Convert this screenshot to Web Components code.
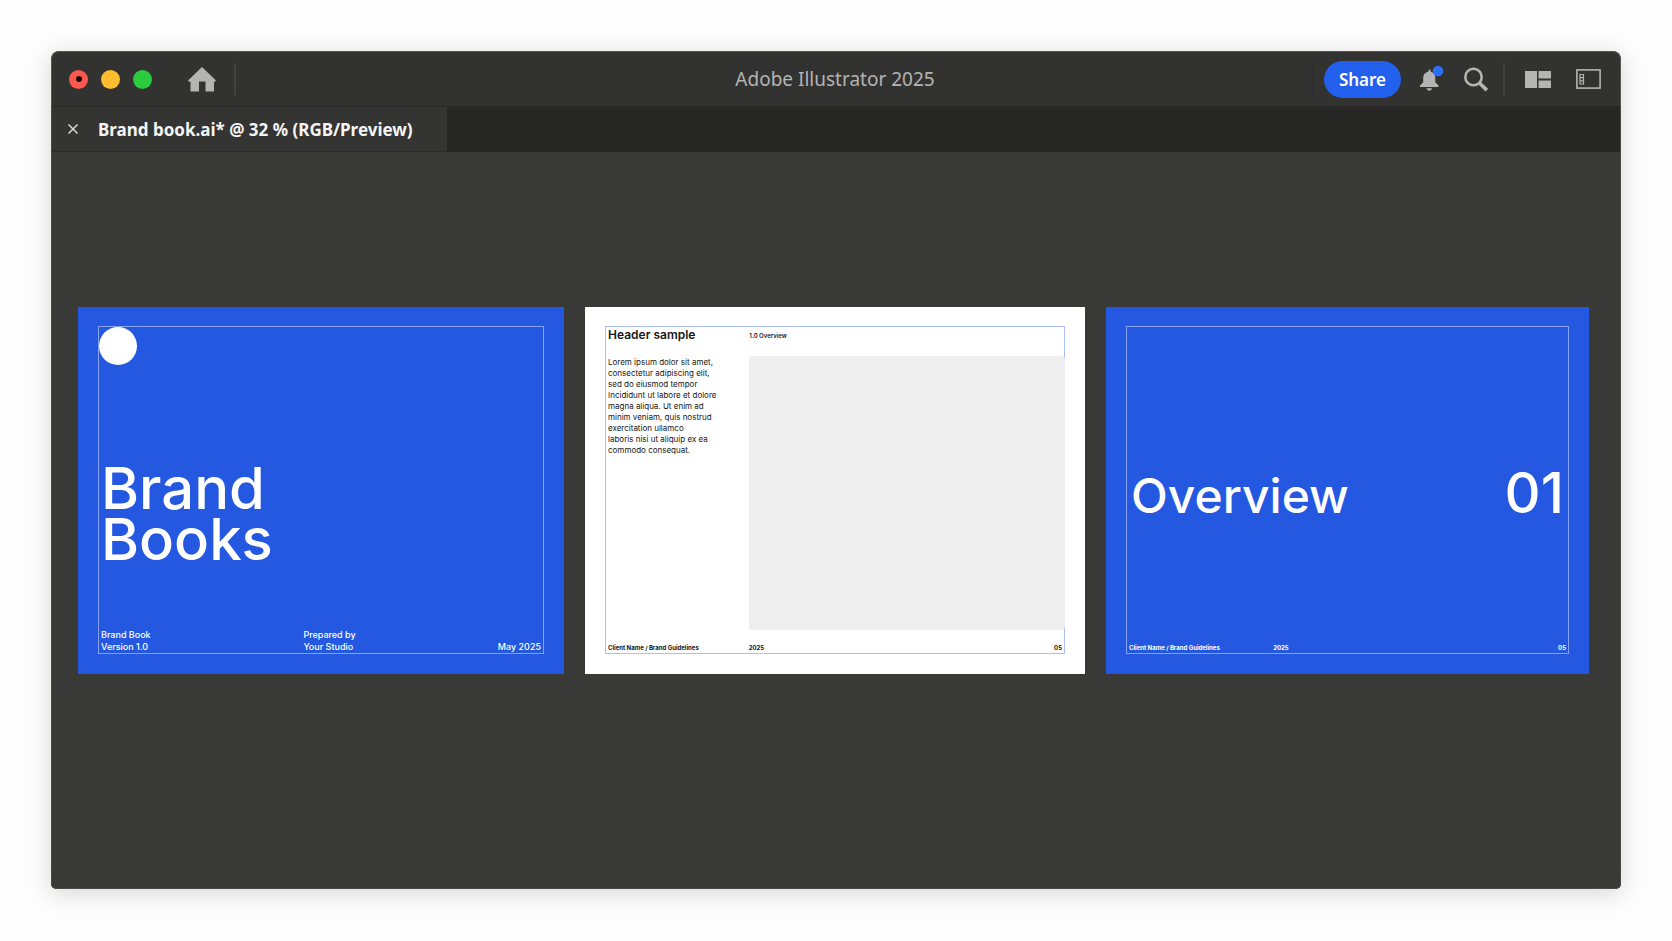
<!DOCTYPE html>
<html lang="en">
<head>
  <meta charset="UTF-8">
  <meta name="viewport" content="width=device-width, initial-scale=1.0">
  <title>Adobe Illustrator 2025</title>
  <style>
    body {
      margin: 0;
      background-color: #fdfdfd;
      font-family: "Noto Sans", "Open Sans", sans-serif;
    }
  </style>
</head>
<body>
  <app-window>
    <title-bar slot="title">Adobe Illustrator 2025</title-bar>
    <tab-bar slot="tabs">Brand book.ai* @ 32 % (RGB/Preview)</tab-bar>

    <art-canvas>
      <cover-board>
        <span slot="title">Brand<br>Books</span>
        <span slot="left">Brand Book<br>Version 1.0</span>
        <span slot="middle">Prepared by<br>Your Studio</span>
        <span slot="right">May 2025</span>
      </cover-board>
      <page-board>
        <span slot="heading">Header sample</span>
        <span slot="section">1.0 Overview</span>
        <span slot="text">Lorem ipsum dolor sit amet,<br>consectetur adipiscing elit,<br>sed do eiusmod tempor<br>Incididunt ut labore et dolore<br>magna aliqua. Ut enim ad<br>minim veniam, quis nostrud<br>exercitation ullamco<br>laboris nisi ut aliquip ex ea<br>commodo consequat.</span>
        <span slot="left">Client Name / Brand Guidelines</span>
        <span slot="middle">2025</span>
        <span slot="right">05</span>
      </page-board>
      <divider-board>
        <span slot="title">Overview</span>
        <span slot="number">01</span>
        <span slot="left">Client Name / Brand Guidelines</span>
        <span slot="middle">2025</span>
        <span slot="right">05</span>
      </divider-board>
    </art-canvas>
  </app-window>

  <script>
    class AppWindow extends HTMLElement {
      constructor() {
        super();
        this.attachShadow({ mode: 'open' });
      }

      connectedCallback() {
        this.shadowRoot.innerHTML = `
        <style>
          :host {
            display: flex;
            box-sizing: border-box;
            min-height: 100vh;
            padding: 51px 51px 52px;
          }

          .window {
            flex: 1;
            display: flex;
            flex-direction: column;
            min-width: 0;
            overflow: hidden;
            border-radius: 8px 8px 5px 5px;
            background-color: #393938;
            box-shadow: 0 4px 24px rgba(0, 0, 0, 0.16);
          }
        </style>
        <div class="window">
          <slot name="title"></slot>
          <slot name="tabs"></slot>
          <slot></slot>
        </div>
        `;
      }
    }

    class TitleBar extends HTMLElement {
      constructor() {
        super();
        this.attachShadow({ mode: 'open' });
      }

      connectedCallback() {
        this.shadowRoot.innerHTML = `
        <style>
          :host {
            display: grid;
            grid-template-columns: 1fr auto 1fr;
            align-items: center;
            box-sizing: border-box;
            height: 56px;
            padding: 0 19px 0 17px;
            color: #b4b4b3;
            background-color: #323231;
            border: 1px solid #555553;
            border-bottom: 1px solid #272726;
            border-radius: 8px 8px 0 0;
          }

          button {
            display: block;
            padding: 0;
            border: none;
            color: inherit;
            font: inherit;
            background: none;
            cursor: pointer;
          }

          svg {
            display: block;
          }

          h1 {
            margin: 0;
            font-size: 19px;
            font-weight: 400;
            line-height: 24px;
          }

          .group {
            display: flex;
            align-items: center;
          }

          .lights {
            display: flex;
            gap: 13px;
            margin-right: 36px;
          }

          .light {
            display: grid;
            place-items: center;
            width: 19px;
            height: 19px;
            border-radius: 50%;
          }

          .close { background-color: #fc5850; }
          .minimise { background-color: #fdbd2e; }
          .zoom { background-color: #2bcb40; }

          .close::after {
            content: '';
            width: 6px;
            height: 6px;
            border-radius: 50%;
            background-color: #1c0505;
          }

          .divider {
            width: 2px;
            height: 32px;
            background-color: #424241;
          }

          .home { margin-right: 18px; }

          .actions { justify-content: flex-end; }

          .share {
            height: 37px;
            margin: 0 18px 0 10px;
            padding: 0 15px;
            border-radius: 19px;
            color: #fff;
            font-size: 17px;
            font-weight: 600;
            background-color: #2360ee;
          }

          .faint { background-color: #2d2d2c; }
          .search { margin: 0 15px 0 20px; }
          .layout { margin: 0 25px 0 20px; }
        </style>
        <div class="group">
          <div class="lights">
            <button class="light close" aria-label="Close"></button>
            <button class="light minimise" aria-label="Minimise"></button>
            <button class="light zoom" aria-label="Zoom"></button>
          </div>
          <button class="home" aria-label="Home">
            <svg width="28" height="25" viewBox="0 0 28 25" fill="#b4b4b3">
              <path d="M14 0L28 13.500L26.800 14.800H26V24.500H17.500V14.500H11V24.500H2.500V14.800H1.200L0 13.500Z"/>
            </svg>
          </button>
          <span class="divider"></span>
        </div>
        <h1><slot></slot></h1>
        <div class="group actions">
          <span class="divider faint"></span>
          <button class="share">Share</button>
          <button aria-label="Notifications">
            <svg width="25" height="28" viewBox="0 0 25 28">
              <path fill="#b4b4b3" d="M9.500 5a1.300 1.300 0 0 1 2 0v1.500c3.300.8 4.800 3.200 4.800 6.200v4.500l3.200 3.300v1.500H1v-1.500l3.200-3.300v-4.500c0-3 1.800-5.400 5.300-6.200zM7.500 23.300h5.500c-.3 1.500-1.300 2.500-2.700 2.500s-2.500-1-2.800-2.500z"/>
              <circle cx="19" cy="6" r="5.300" fill="#2b6ff5"/>
            </svg>
          </button>
          <button class="search" aria-label="Search">
            <svg width="24" height="25" viewBox="0 0 24 25" fill="none" stroke="#b4b4b3">
              <circle cx="9.500" cy="10" r="8.200" stroke-width="2.600"/>
              <path d="M15.500 16L22.800 23.200" stroke-width="3.600"/>
            </svg>
          </button>
          <span class="divider"></span>
          <button class="layout" aria-label="Arrange documents">
            <svg width="26" height="17" viewBox="0 0 26 17" fill="#b4b4b3">
              <path d="M0 0H12V17H0zM13.500 0H26V7.500H13.500zM13.500 9.500H26V17H13.500z"/>
            </svg>
          </button>
          <button aria-label="Switch workspace">
            <svg width="25" height="20" viewBox="0 0 25 20" fill="none" stroke="#b4b4b3">
              <rect x=".9" y=".9" width="23.200" height="18.200" stroke-width="1.600"/>
              <path d="M4 5.500H7.500V15H4zM4 8.700H7.500M4 11.800H7.500" stroke-width="1.200"/>
            </svg>
          </button>
        </div>
        `;
      }
    }

    class TabBar extends HTMLElement {
      constructor() {
        super();
        this.attachShadow({ mode: 'open' });
      }

      connectedCallback() {
        this.shadowRoot.innerHTML = `
        <style>
          :host {
            display: flex;
            box-sizing: border-box;
            height: 45px;
            border: solid #4a4a48;
            border-width: 0 1px;
            background-color: #262625;
          }

          .tab {
            display: flex;
            align-items: center;
            gap: 20px;
            padding: 0 34px 0 16px;
            color: #f5f5f5;
            font-size: 17px;
            font-weight: 700;
            background-color: #343433;
            border-bottom: 1px solid #2a2a29;
          }

          button {
            padding: 0;
            border: none;
            background: none;
            cursor: pointer;
          }

          svg {
            display: block;
          }
        </style>
        <div class="tab">
          <button aria-label="Close document">
            <svg width="10" height="10" viewBox="0 0 10 10" stroke="#d8d8d8" stroke-width="1.500">
              <path d="M.5 .5L9.500 9.500M9.500 .5L.5 9.500"/>
            </svg>
          </button>
          <slot></slot>
        </div>
        `;
      }
    }

    class ArtCanvas extends HTMLElement {
      constructor() {
        super();
        this.attachShadow({ mode: 'open' });
      }

      connectedCallback() {
        this.shadowRoot.innerHTML = `
        <style>
          :host {
            flex: 1;
            display: grid;
            grid-template-columns: 486fr 500fr 483fr;
            gap: 21px;
            align-content: center;
            padding: 0 31px 60px 26px;
            border: 1px solid #4a4a48;
            border-top: none;
            border-radius: 0 0 5px 5px;
            font-family: Inter, "Liberation Sans", sans-serif;
          }
        </style>
        <slot></slot>
        `;
      }
    }

    // Frame and footer row shared by the three artboards
    const boardStyles = `
      :host {
        display: flex;
        box-sizing: border-box;
        padding: 19px 20px 20px;
        color: #fff;
        background-color: #2458e1;
      }

      .frame {
        flex: 1;
        display: flex;
        flex-direction: column;
        min-width: 0;
        border: 1px solid #86a3f2;
      }

      h2, p {
        margin: 0;
        font-weight: 500;
      }

      footer {
        display: grid;
        grid-template-columns: var(--first-column) 1fr auto;
        align-items: end;
        padding: 0 2px;
        font-size: 6px;
        font-weight: 700;
        line-height: 11px;
        white-space: nowrap;
      }
    `;

    const boardFooter = `
      <footer>
        <slot name="left"></slot>
        <slot name="middle"></slot>
        <slot name="right"></slot>
      </footer>
    `;

    class CoverBoard extends HTMLElement {
      constructor() {
        super();
        this.attachShadow({ mode: 'open' });
      }

      connectedCallback() {
        this.shadowRoot.innerHTML = `
        <style>
          ${boardStyles}
          :host {
            --first-column: 46%;
            aspect-ratio: 486 / 367;
          }

          .logo {
            width: 38px;
            height: 38px;
            border-radius: 50%;
            background-color: #fff;
          }

          h2 {
            margin-top: auto;
            padding-left: 2px;
            font-size: 58px;
            line-height: 51px;
          }

          footer {
            margin-top: 64px;
            font-size: 9px;
            font-weight: 500;
            line-height: 12px;
          }
        </style>
        <div class="frame">
          <div class="logo"></div>
          <h2><slot name="title"></slot></h2>
          ${boardFooter}
        </div>
        `;
      }
    }

    class PageBoard extends HTMLElement {
      constructor() {
        super();
        this.attachShadow({ mode: 'open' });
      }

      connectedCallback() {
        this.shadowRoot.innerHTML = `
        <style>
          ${boardStyles}
          :host {
            --first-column: 31%;
            color: #161616;
            background-color: #fff;
          }

          .frame {
            border-color: #adbff8;
          }

          .page {
            flex: 1;
            display: grid;
            grid-template-columns: var(--first-column) 1fr;
            grid-template-rows: 29px 1fr;
            padding-left: 2px;
          }

          h2 {
            font-size: 12px;
            font-weight: 600;
            line-height: 15px;
          }

          .section {
            font-size: 6px;
            font-weight: 600;
            line-height: 18px;
          }

          .text {
            padding-top: 1px;
            font-size: 8px;
            font-weight: 400;
            line-height: 11px;
            white-space: nowrap;
          }

          /* the picture box runs over the right edge of the frame */
          .picture {
            margin-right: -1px;
            border-radius: 4px;
            background-color: #efefef;
          }

          footer {
            margin-top: 12px;
          }
        </style>
        <div class="frame">
          <div class="page">
            <h2><slot name="heading"></slot></h2>
            <p class="section"><slot name="section"></slot></p>
            <p class="text"><slot name="text"></slot></p>
            <div class="picture"></div>
          </div>
          ${boardFooter}
        </div>
        `;
      }
    }

    class DividerBoard extends HTMLElement {
      constructor() {
        super();
        this.attachShadow({ mode: 'open' });
      }

      connectedCallback() {
        this.shadowRoot.innerHTML = `
        <style>
          ${boardStyles}
          :host {
            --first-column: 33%;
          }

          .row {
            display: flex;
            justify-content: space-between;
            align-items: baseline;
            margin-top: auto;
            padding: 0 4px;
            line-height: 56px;
          }

          h2 {
            font-size: 48px;
          }

          p {
            font-size: 56px;
          }

          footer {
            margin-top: 118px;
          }
        </style>
        <div class="frame">
          <div class="row">
            <h2><slot name="title"></slot></h2>
            <p><slot name="number"></slot></p>
          </div>
          ${boardFooter}
        </div>
        `;
      }
    }

    customElements.define('app-window', AppWindow);
    customElements.define('title-bar', TitleBar);
    customElements.define('tab-bar', TabBar);
    customElements.define('art-canvas', ArtCanvas);
    customElements.define('cover-board', CoverBoard);
    customElements.define('page-board', PageBoard);
    customElements.define('divider-board', DividerBoard);
  </script>
</body>
</html>
